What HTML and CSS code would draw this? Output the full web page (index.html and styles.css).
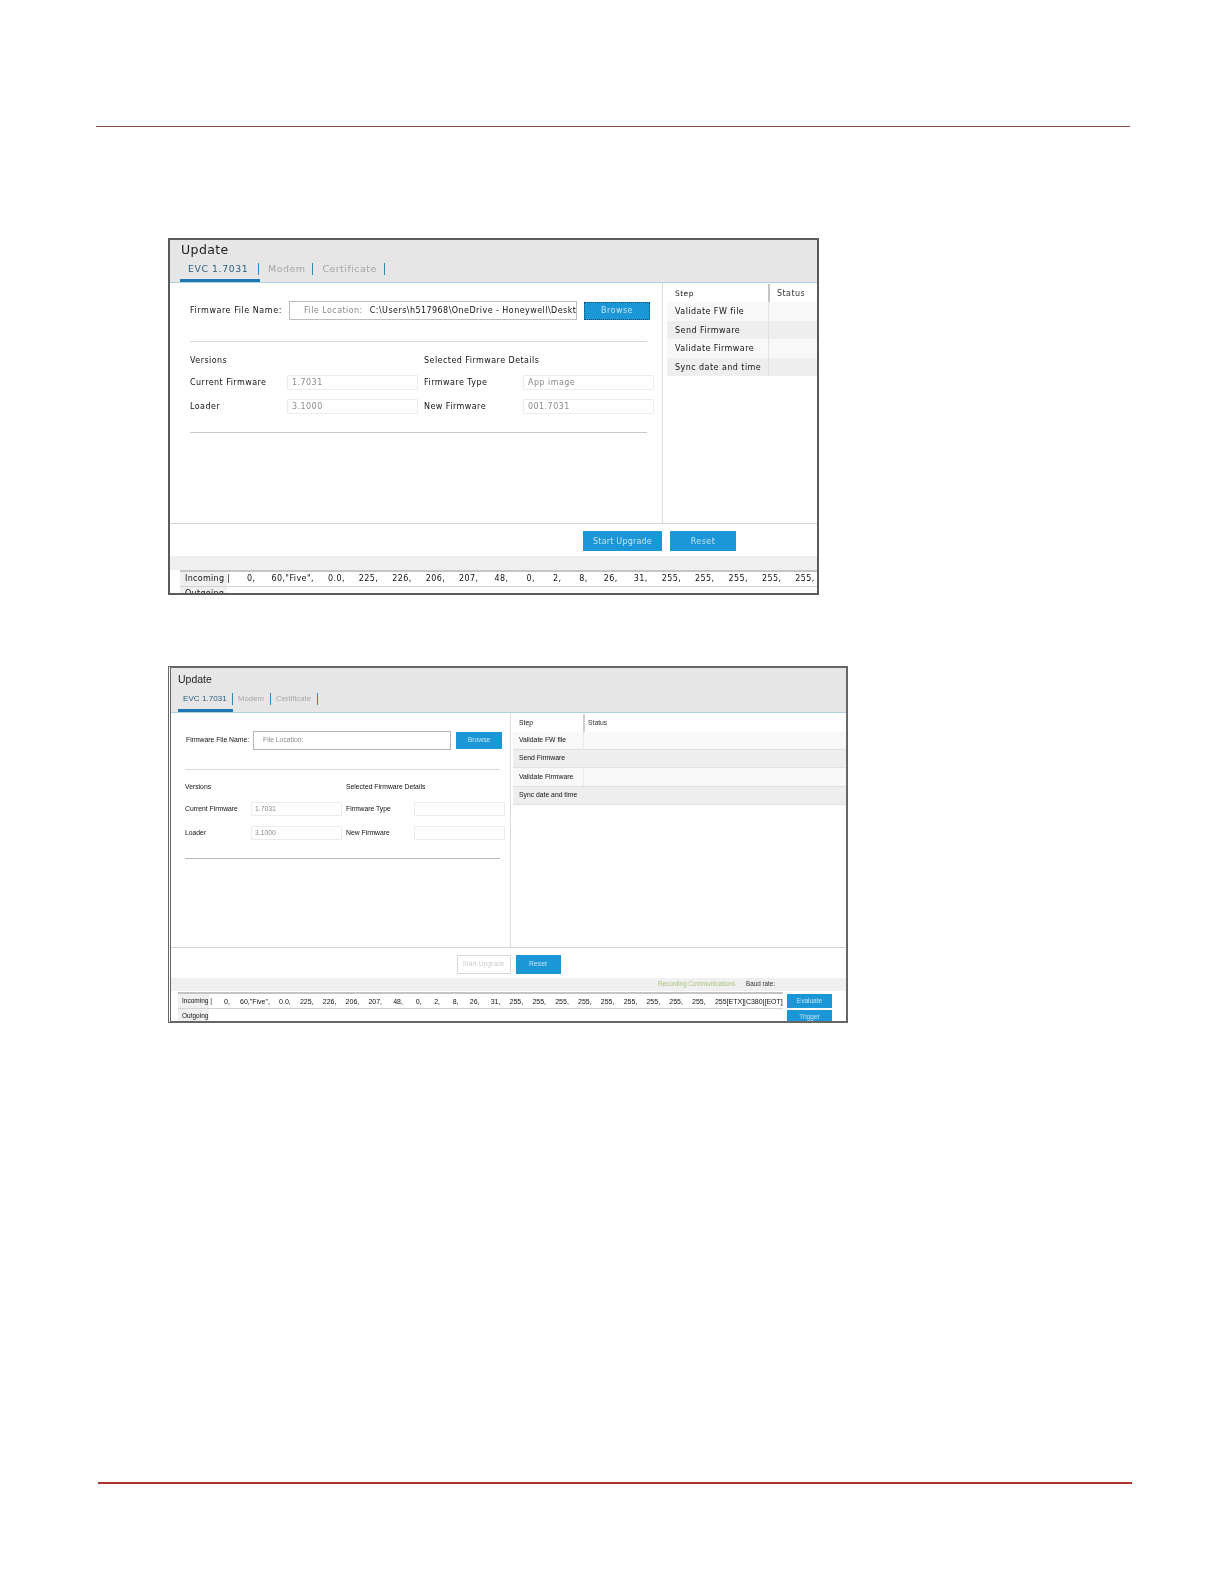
FILE: index.html
```html
<!DOCTYPE html>
<html lang="en">
<head>
<meta charset="utf-8">
<title>Update</title>
<link rel="stylesheet" href="styles.css">
</head>
<body>
<div class="rule rule-top"></div>

<section class="win win-a">
  <header class="head">
    <div class="title">Update</div>
    <nav class="tabs">
      <div class="tab active"><span>EVC 1.7031</span></div>
      <div class="tab"><span>Modem</span></div>
      <div class="tab"><span>Certificate</span></div>
    </nav>
  </header>
  <div class="body">
    <div class="left">
      <div class="file-row">
        <div class="file-label">Firmware File Name:</div>
        <div class="file-input"><span class="hint">File Location:</span><span class="path">C:\Users\h517968\OneDrive - Honeywell\Desktop</span></div>
        <div class="btn browse focus">Browse</div>
      </div>
      <div class="hr"></div>
      <div class="fields">
        <div class="heading">Versions</div>
        <div class="spacer"></div>
        <div class="heading span2">Selected Firmware Details</div>
        <div>Current Firmware</div><div class="field">1.7031</div>
        <div>Firmware Type</div><div class="field">App image</div>
        <div>Loader</div><div class="field">3.1000</div>
        <div>New Firmware</div><div class="field">001.7031</div>
      </div>
      <div class="hr hr2"></div>
    </div>
    <div class="right">
      <div class="t-row t-head"><div class="step">Step</div><div class="status">Status</div></div>
      <div class="t-row odd"><div class="step">Validate FW file</div><div class="status"></div></div>
      <div class="t-row even"><div class="step">Send Firmware</div><div class="status"></div></div>
      <div class="t-row odd"><div class="step">Validate Firmware</div><div class="status"></div></div>
      <div class="t-row even"><div class="step">Sync date and time</div><div class="status"></div></div>
    </div>
  </div>
  <div class="actions">
    <div class="btn start">Start Upgrade</div>
    <div class="btn reset">Reset</div>
  </div>
  <div class="log">
    <div class="band"></div>
    <div class="log-main">
      <div class="log-table">
        <div class="log-row">
          <div class="log-label">Incoming |</div>
          <div class="vals">
            <span class="n1">0,</span><span class="five">60,"Five",</span><span>0.0,</span><span>225,</span><span>226,</span><span>206,</span><span>207,</span><span class="n2">48,</span><span class="n1b">0,</span><span class="n1b">2,</span><span class="n1b">8,</span><span class="n2">26,</span><span class="n2">31,</span><span>255,</span><span>255,</span><span>255,</span><span>255,</span><span>255,</span>
          </div>
        </div>
        <div class="log-row"><div class="log-label">Outgoing</div></div>
      </div>
    </div>
  </div>
</section>

<section class="win win-b">
  <header class="head">
    <div class="title">Update</div>
    <nav class="tabs">
      <div class="tab active"><span>EVC 1.7031</span></div>
      <div class="tab"><span>Modem</span></div>
      <div class="tab"><span>Certificate</span></div>
    </nav>
  </header>
  <div class="body">
    <div class="left">
      <div class="file-row">
        <div class="file-label">Firmware File Name:</div>
        <div class="file-input"><span class="hint">File Location:</span></div>
        <div class="btn browse">Browse</div>
      </div>
      <div class="hr"></div>
      <div class="fields">
        <div class="heading">Versions</div>
        <div class="spacer"></div>
        <div class="heading span2">Selected Firmware Details</div>
        <div>Current Firmware</div><div class="field">1.7031</div>
        <div>Firmware Type</div><div class="field"></div>
        <div>Loader</div><div class="field">3.1000</div>
        <div>New Firmware</div><div class="field"></div>
      </div>
      <div class="hr hr2"></div>
    </div>
    <div class="right">
      <div class="t-row t-head"><div class="step">Step</div><div class="status">Status</div></div>
      <div class="t-row odd"><div class="step">Validate FW file</div><div class="status"></div></div>
      <div class="t-row even"><div class="step">Send Firmware</div><div class="status"></div></div>
      <div class="t-row odd"><div class="step">Validate Firmware</div><div class="status"></div></div>
      <div class="t-row even"><div class="step">Sync date and time</div><div class="status"></div></div>
    </div>
  </div>
  <div class="actions">
    <div class="btn start">Start Upgrade</div>
    <div class="btn reset">Reset</div>
  </div>
  <div class="log">
    <div class="band"><span class="rec">Recording Communications</span><span class="baud">Baud rate:</span></div>
    <div class="log-main">
      <div class="log-table">
        <div class="log-row">
          <div class="log-label">Incoming |</div>
          <div class="vals">
            <span class="n1">0,</span><span class="five">60,"Five",</span><span>0.0,</span><span>225,</span><span>226,</span><span>206,</span><span>207,</span><span class="n2">48,</span><span class="n1b">0,</span><span class="n1b">2,</span><span class="n1b">8,</span><span class="n2">26,</span><span class="n2">31,</span><span>255,</span><span>255,</span><span>255,</span><span>255,</span><span>255,</span><span>255,</span><span>255,</span><span>255,</span><span>255,</span><span>255[ETX]|C380|[EOT]</span>
          </div>
        </div>
        <div class="log-row"><div class="log-label">Outgoing</div></div>
      </div>
      <div class="log-actions">
        <div class="btn">Evaluate</div>
        <div class="btn">Trigger</div>
      </div>
    </div>
  </div>
</section>

<div class="rule rule-bottom"></div>
</body>
</html>
```

FILE: styles.css
```css
* { box-sizing: border-box; }
html, body { margin: 0; padding: 0; background: #fff; }
body { width: 1224px; height: 1584px; overflow: hidden; padding-top: 126px; color: #111; }

.rule { height: 1px; }
.rule-top { margin: 0 94px 0 96px; background: #8a4a3c; }
.rule-bottom { margin: 459px 92px 0 98px; height: 2px; background: #ae2f2c; }

.win { display: flex; flex-direction: column; margin-left: 168px; height: 357px; background: #fff; overflow: hidden; filter: blur(.25px); }
.btn { display: flex; align-items: center; justify-content: center; background: #1b96d6; color: #c4e5f6; }
.head { background: #e6e6e6; border-bottom: 1px solid #a9d2e6; flex: none; }
.tabs { display: flex; }
.tab { display: flex; align-items: flex-start; border-bottom: 3px solid transparent; color: #a6a6a6; }
.tab span { display: block; border-right: 1px solid #2b88b8; }
.tab.active { border-bottom-color: #1f78b4; color: #2d5f80; }
.body { display: flex; flex: none; }
.left { flex: none; border-right: 1px solid #dcdcdc; }
.right { flex: 1; min-width: 0; }
.file-row { display: flex; align-items: center; }
.file-label { flex: none; }
.file-input { display: flex; flex: none; white-space: nowrap; overflow: hidden; align-items: center; background: #fff; border: 1px solid #bdbdbd; }
.hint { color: #8a8a8a; }
.path { color: #111; }
.hr { background: #d9d9d9; height: 1px; }
.fields { display: grid; align-items: center; }
.span2 { grid-column: span 2; }
.field { display: flex; align-items: center; align-self: stretch; color: #8a8a8a; background: #fff; border: 1px solid #ececec; }
.t-row { display: flex; }
.step { flex: none; display: flex; align-items: center; }
.status { flex: 1; display: flex; align-items: center; }
.t-head .status { color: #333; }
.odd { background: #f8f8f8; }
.even { background: #eeeeee; }
.actions { display: flex; flex: none; border-top: 1px solid #d4d4d4; align-items: center; }
.log { flex: 1; min-height: 0; }
.band { display: flex; align-items: center; background: #efefef; }
.log-main { display: flex; }
.log-table { border-top: 2px solid #c4c4c4; }
.log-row { display: flex; align-items: center; white-space: nowrap; border-bottom: 1px solid #d2d2d2; }
.log-label { flex: none; display: flex; align-items: center; height: 100%; background: #f0f0f0; }
.vals { display: flex; }

/* first window: screenshot stretched sideways */
.win-a { width: 651px; margin-top: 111px; border: 2px solid #5a5a5a; font: 8px/1 "DejaVu Sans", sans-serif; letter-spacing: .45px; }
.win-a .head { height: 43px; padding: 3px 0 0 10px; }
.win-a .title { font: 12.5px/14px "DejaVu Sans", sans-serif; letter-spacing: .4px; padding-left: 1px; color: #222; height: 20px; }
.win-a .tabs { height: 19px; }
.win-a .tab { margin-right: 9px; font-size: 9.5px; }
.win-a .tab span { line-height: 12px; height: 12px; padding-right: 7px; }
.win-a .tab.active { width: 80px; padding-left: 8px; margin-right: 8px; font-size: 9.3px; }
.win-a .tab.active span { padding-right: 10px; letter-spacing: .6px; white-space: nowrap; }
.win-a .body { height: 240px; }
.win-a .left { width: 493px; padding: 18px 10px 0 20px; }
.win-a .file-label { width: 99px; letter-spacing: .55px; }
.win-a .file-input { width: 288px; height: 19px; padding-left: 14px; }
.win-a .hint { margin-right: 7px; }
.win-a .browse { width: 66px; height: 18px; margin-left: 7px; border: 1px dotted #124a6b; }
.win-a .file-row + .hr { margin-top: 21px; }
.win-a .fields { grid-template-columns: 97px 137px 99px 132px; grid-template-rows: 11px 15px 15px; row-gap: 9px; margin-top: 13px; }
.win-a .field { width: 131px; padding-left: 4px; }
.win-a .hr { width: 457px; }
.win-a .hr2 { margin-top: 18px; background: #c8c8c8; }
.win-a .right { padding-top: 1px; }
.win-a .t-row { margin-left: 4px; height: 18.5px; }
.win-a .t-head { height: 18px; }
.win-a .step { width: 101px; padding: 2px 0 0 8px; }
.win-a .status { border-left: 1px solid #e2e2e2; padding: 2px 0 0 7px; }
.win-a .t-head .status { border-left: 2px solid #c4c4c4; }
.win-a .t-head .step { font-size: 7.5px; }
.win-a .actions { height: 33px; justify-content: flex-end; padding: 2px 81px 0 0; gap: 8px; }
.win-a .start { width: 79px; height: 20px; letter-spacing: .2px; padding-top: 1px; }
.win-a .reset { width: 66px; height: 20px; padding-top: 1px; }
.win-a .band { height: 14px; }
.win-a .log-table { margin-left: 10px; flex: 1; }
.win-a .log-row { height: 15px; }
.win-a .log-label { width: 47px; padding-left: 5px; letter-spacing: .3px; }
.win-a .vals { margin-left: 20px; gap: 14px; letter-spacing: .4px; }
.win-a .five { margin-left: 2px; }
.win-a .n2 { margin-left: 2px; }
.win-a .n1b { margin-left: 4px; }

/* second window */
.win-b { width: 680px; margin-top: 71px; border: 2px solid #666; border-left: 3px double #666; font: 6.8px/1 "Liberation Sans", Arial, sans-serif; }
.win-b .head { height: 45px; padding: 5px 0 0 7px; }
.win-b .title { font: 10.5px/12px "Liberation Sans", Arial, sans-serif; color: #222; height: 20px; }
.win-b .tabs { height: 19px; }
.win-b .tab { font-size: 7.8px; margin-right: 5px; }
.win-b .tab span { line-height: 12px; height: 12px; padding-right: 6px; }
.win-b .tab.active { width: 55px; padding-left: 5px; font-size: 8.1px; }
.win-b .tab.active span { padding-right: 5px; white-space: nowrap; }
.win-b .body { height: 234px; }
.win-b .left { width: 340px; padding: 18px 0 0 14px; }
.win-b .file-label { width: 68px; padding-left: 1px; }
.win-b .file-input { width: 198px; height: 19px; padding-left: 9px; border-color: #b5b5b5; }
.win-b .browse { width: 46px; height: 17px; margin-left: 5px; }
.win-b .file-row + .hr { margin-top: 19px; }
.win-b .fields { grid-template-columns: 66px 95px 68px 91px; grid-template-rows: 9px 14px 14px; row-gap: 10px; margin-top: 13px; }
.win-b .field { width: 91px; padding-left: 3px; }
.win-b .hr { width: 315px; }
.win-b .hr2 { margin-top: 18px; background: #b8b8b8; }
.win-b .t-row { margin-left: 2px; height: 18.2px; }
.win-b .t-head { height: 19px; padding-top: 1px; }
.win-b .step { width: 70px; padding-left: 6px; }
.win-b .status { border-left: 1px solid #e8e8e8; padding-left: 3px; }
.win-b .even .status { border-left: 0; }
.win-b .t-head .status { border-left: 2px solid #d0d0d0; }
.win-b .odd, .win-b .even { border-bottom: 1px solid #e0e0e0; }
.win-b .actions { height: 31px; justify-content: center; gap: 5px; padding-top: 2px; }
.win-b .start { width: 54px; height: 19px; background: #fff; border: 1px solid #d8d8d8; color: #d0d0d0; }
.win-b .reset { width: 45px; height: 19px; }
.win-b .band { height: 13px; padding-left: 487px; font-size: 6.3px; }
.win-b .rec { color: #a9c47f; width: 88px; white-space: nowrap; }
.win-b .baud { color: #333; }
.win-b .log-main { padding-top: 1px; }
.win-b .log-table { margin-left: 7px; width: 605px; }
.win-b .log-row { height: 15px; }
.win-b .log-label { width: 31px; padding-left: 4px; font-size: 6.5px; }
.win-b .vals { margin-left: 15px; gap: 9.2px; font-size: 7px; }
.win-b .five { margin-left: 1px; }
.win-b .n2 { margin-left: 2px; }
.win-b .n1b { margin-left: 3.5px; }
.win-b .log-actions { display: flex; flex-direction: column; width: 45px; margin-left: 4px; padding-top: 2px; gap: 2px; font-size: 6.5px; }
.win-b .log-actions .btn { height: 14px; flex: none; }
```
